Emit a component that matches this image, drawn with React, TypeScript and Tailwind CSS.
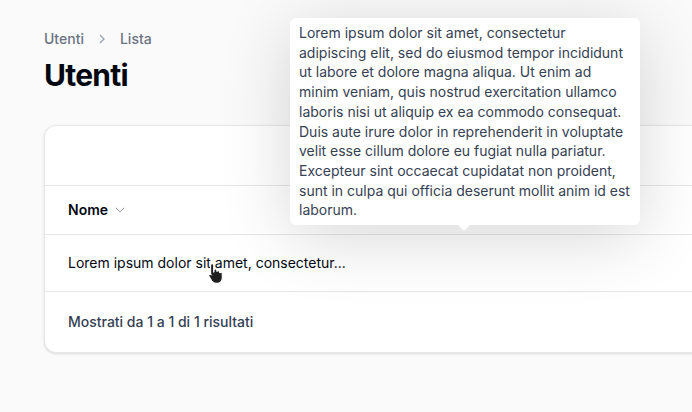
import { ChevronDown } from "lucide-react";

const LONG_TEXT =
  "Lorem ipsum dolor sit amet, consectetur adipiscing elit, sed do eiusmod tempor incididunt ut labore et dolore magna aliqua. Ut enim ad minim veniam, quis nostrud exercitation ullamco laboris nisi ut aliquip ex ea commodo consequat. Duis aute irure dolor in reprehenderit in voluptate velit esse cillum dolore eu fugiat nulla pariatur. Excepteur sint occaecat cupidatat non proident, sunt in culpa qui officia deserunt mollit anim id est laborum.";

function HandCursor() {
  return (
    <svg width="18" height="22" viewBox="0 0 16 20" className="absolute left-[207px] top-[262px]">
      <path
        d="M4.5 1.5c.8 0 1.4.6 1.4 1.4v6.2l.3-.1V7.6c0-.8.6-1.3 1.3-1.3s1.3.6 1.3 1.3v1.2c.2-.6.7-.9 1.3-.9.7 0 1.3.6 1.3 1.3v.8c.2-.4.6-.7 1.1-.7.7 0 1.2.6 1.2 1.3v3.9c0 2.7-2 4.9-4.6 4.9H8c-1.6 0-2.9-.8-3.800-2.1L1.6 13c-.4-.6-.2-1.4.4-1.7.5-.3 1.2-.2 1.6.3l-.5-.1V2.9c0-.8.6-1.4 1.4-1.4z"
        fill="#1f1f1f"
        stroke="#fff"
        strokeWidth="1"
      />
    </svg>
  );
}

export default function App() {
  return (
    <div
      className="relative h-[412px] w-[692px] overflow-hidden bg-[#fafafa]"
      style={{ fontFamily: "Inter, 'Noto Sans', sans-serif" }}
    >
      <div className="pl-11 pt-[29px]">
        <nav className="flex items-center gap-3 text-sm font-medium text-gray-500">
          <span>Utenti</span>
          <svg width="12" height="12" viewBox="0 0 12 12" className="text-gray-400">
            <path d="M4 2l4 4-4 4" fill="none" stroke="currentColor" strokeWidth="1.3" />
          </svg>
          <span>Lista</span>
        </nav>
        <h1 className="mt-[8px] text-[30px] font-bold leading-9 tracking-tight text-gray-950">Utenti</h1>

        <div className="mt-[32px] w-[700px] overflow-hidden rounded-xl border border-gray-200 bg-white shadow-sm">
          <div className="h-[60px] border-b border-gray-200" />
          <div className="flex h-[49px] items-center border-b border-gray-200 pl-[23px] text-sm">
            <span className="font-semibold text-gray-950">Nome</span>
            <ChevronDown className="ml-1 h-4 w-4 text-gray-400" strokeWidth={1.5} />
          </div>
          <div className="flex h-[57px] items-center border-b border-gray-200 pl-[23px] text-sm text-gray-950">
            Lorem ipsum dolor sit amet, consectetur...
          </div>
          <div className="flex h-[60px] items-center pl-[23px] text-sm font-medium text-gray-700">
            Mostrati da 1 a 1 di 1 risultati
          </div>
        </div>
      </div>

      <div className="absolute left-[290px] top-[18px] w-[350px] rounded-md bg-white px-[9px] py-[5px] text-sm leading-[19.7px] text-gray-700 shadow-[0_12px_70px_rgba(0,0,0,0.16)]">
        {LONG_TEXT}
        <span className="absolute -bottom-[6px] left-[168px] h-0 w-0 border-x-[6px] border-t-[6px] border-x-transparent border-t-white" />
      </div>

      <HandCursor />
    </div>
  );
}
